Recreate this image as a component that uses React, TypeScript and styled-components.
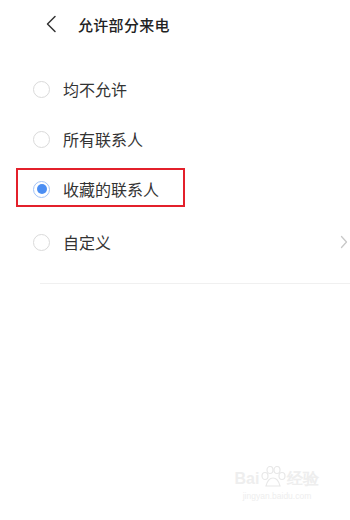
import React from "react";
import styled, { createGlobalStyle } from "styled-components";

const Global = createGlobalStyle`
  html, body { margin: 0; padding: 0; background: #fff; }
  body { font-family: "Noto Sans CJK SC", "Noto Sans", sans-serif; }
`;

const Page = styled.div`
  position: relative;
  width: 350px;
  height: 520px;
  background: #fff;
  overflow: hidden;
`;

const Header = styled.div`
  height: 48px;
  display: flex;
  align-items: center;
  padding-left: 45px;
  gap: 21px;
`;

const Title = styled.div`
  font-size: 15px;
  font-weight: 500;
  color: #222;
  letter-spacing: 0.3px;
`;

const List = styled.div`
  display: flex;
  flex-direction: column;
  padding-top: 16px;
`;

const Row = styled.div<{ $h?: number }>`
  position: relative;
  height: ${(p) => p.$h ?? 50}px;
  display: flex;
  align-items: center;
  padding-left: 33px;
  padding-right: 2px;
`;

const Radio = styled.span<{ $on?: boolean }>`
  width: 17px;
  height: 17px;
  box-sizing: border-box;
  border-radius: 50%;
  border: 1.5px solid ${(p) => (p.$on ? "#a3c3f6" : "#dadada")};
  display: flex;
  align-items: center;
  justify-content: center;
  flex: none;
  &::after {
    content: "";
    display: ${(p) => (p.$on ? "block" : "none")};
    width: 10px;
    height: 10px;
    border-radius: 50%;
    background: #4b8ef3;
  }
`;

const Label = styled.span`
  margin-left: 13px;
  font-size: 16px;
  color: #333;
  flex: 1;
`;

const Highlight = styled.div`
  position: absolute;
  left: 16px;
  top: 4px;
  width: 169px;
  height: 39px;
  box-sizing: border-box;
  border: 2px solid #e3202b;
  pointer-events: none;
`;

const Divider = styled.div`
  margin: 13px 0 0 40px;
  height: 1px;
  background: #f0f0f0;
`;

const Watermark = styled.div`
  position: absolute;
  left: 232px;
  top: 466px;
  width: 90px;
  display: flex;
  flex-direction: column;
  align-items: center;
  color: #eeeeee;
  font-family: "Liberation Sans", sans-serif;
`;

const WmTop = styled.div`
  display: flex;
  align-items: flex-end;
  font-size: 16px;
  font-weight: bold;
  line-height: 18px;
  gap: 1px;
`;

const WmBottom = styled.div`
  font-size: 8.5px;
  margin-top: 3px;
`;

const BackIcon = () => (
  <svg width="12" height="18" viewBox="0 0 12 18">
    <path d="M10 1.5 L2.5 9 L10 16.5" fill="none" stroke="#333" strokeWidth="1.5" strokeLinecap="round" strokeLinejoin="round" />
  </svg>
);

const Chevron = () => (
  <svg width="8" height="14" viewBox="0 0 8 14">
    <path d="M1.5 1.5 L6.5 7 L1.5 12.5" fill="none" stroke="#c8c8c8" strokeWidth="1.3" strokeLinecap="round" strokeLinejoin="round" />
  </svg>
);

const Paw = () => (
  <svg width="26" height="22" viewBox="0 0 26 22">
    <g fill="none" stroke="#e8e8e8" strokeWidth="1.2">
      <ellipse cx="5" cy="10" rx="3" ry="3.5" />
      <ellipse cx="10" cy="4" rx="3" ry="3.5" />
      <ellipse cx="17" cy="4" rx="3" ry="3.5" />
      <ellipse cx="22" cy="10" rx="3" ry="3.5" />
      <path d="M6 20 Q8 12 13 12 Q18 12 20 20 Z" />
    </g>
  </svg>
);

const items = ["均不允许", "所有联系人", "收藏的联系人"];

export default function App() {
  return (
    <Page>
      <Global />
      <Header>
        <BackIcon />
        <Title>允许部分来电</Title>
      </Header>
      <List>
        {items.map((t, i) => (
          <Row key={t}>
            <Radio $on={i === 2} />
            <Label>{t}</Label>
            {i === 2 && <Highlight />}
          </Row>
        ))}
        <Row $h={56}>
          <Radio />
          <Label>自定义</Label>
          <Chevron />
        </Row>
      </List>
      <Divider />
      <Watermark>
        <WmTop>
          <span>Bai</span>
          <Paw />
          <span>经验</span>
        </WmTop>
        <WmBottom>jingyan.baidu.com</WmBottom>
      </Watermark>
    </Page>
  );
}
